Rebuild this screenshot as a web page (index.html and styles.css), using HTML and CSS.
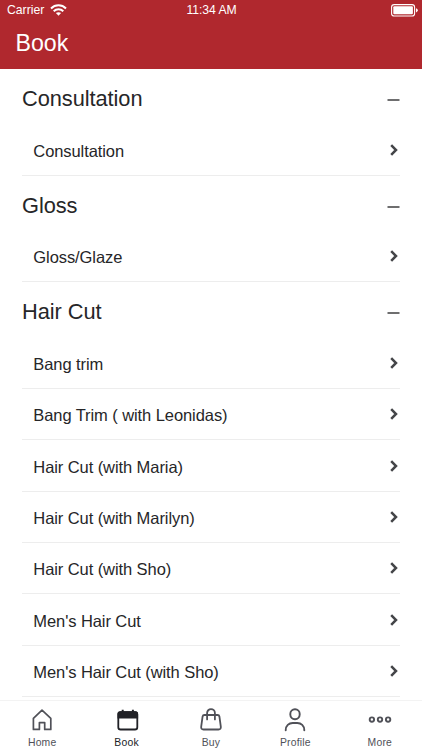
FILE: index.html
```html
<!DOCTYPE html>
<html lang="en">
<head>
<meta charset="utf-8">
<title>Book</title>
<link rel="stylesheet" href="styles.css">
</head>
<body>
<svg class="defs" width="0" height="0">
  <symbol id="chevron" viewBox="0 0 8 12"><path d="M1.2 1.2 6 6 1.2 10.8" fill="none" stroke="#444548" stroke-width="2.5"/></symbol>
  <symbol id="minus" viewBox="0 0 13 4"><path d="M.5 2h12" fill="none" stroke="#303032" stroke-width="1.4"/></symbol>
</svg>
<div class="app">
  <header class="header">
    <div class="status">
      <div class="carrier"><span>Carrier</span>
        <svg width="17" height="12" viewBox="0 0 17 12" fill="none" stroke="#fff" stroke-width="2"><path d="M1 4.5C5.2.3 11.8.3 16 4.5M3.7 7.2C6.4 4.6 10.6 4.6 13.3 7.2"/><path d="M5.9 9.1C7.4 7.8 9.6 7.8 11.1 9.1L8.5 11.8Z" fill="#fff" stroke="none"/></svg>
      </div>
      <span class="time">11:34 AM</span>
      <svg class="battery" width="27" height="13" viewBox="0 0 27 13"><rect x=".6" y=".6" width="23" height="11.4" rx="2.6" fill="none" stroke="#fff" stroke-width="1.1"/><rect x="2.3" y="2.3" width="19.6" height="8" rx="1" fill="#fff"/><path d="M25 4.2q1.8.6 1.8 2.1T25 8.4z" fill="#fff"/></svg>
    </div>
    <h1>Book</h1>
  </header>
  <main class="services">
    <section>
      <h2>Consultation<svg class="minus"><use href="#minus"/></svg></h2>
      <div class="item">Consultation<svg class="chevron"><use href="#chevron"/></svg></div>
    </section>
    <section>
      <h2>Gloss<svg class="minus"><use href="#minus"/></svg></h2>
      <div class="item">Gloss/Glaze<svg class="chevron"><use href="#chevron"/></svg></div>
    </section>
    <section>
      <h2>Hair Cut<svg class="minus"><use href="#minus"/></svg></h2>
      <div class="item">Bang trim<svg class="chevron"><use href="#chevron"/></svg></div>
      <div class="item">Bang Trim ( with Leonidas)<svg class="chevron"><use href="#chevron"/></svg></div>
      <div class="item">Hair Cut (with Maria)<svg class="chevron"><use href="#chevron"/></svg></div>
      <div class="item">Hair Cut (with Marilyn)<svg class="chevron"><use href="#chevron"/></svg></div>
      <div class="item">Hair Cut (with Sho)<svg class="chevron"><use href="#chevron"/></svg></div>
      <div class="item">Men's Hair Cut<svg class="chevron"><use href="#chevron"/></svg></div>
      <div class="item">Men's Hair Cut (with Sho)<svg class="chevron"><use href="#chevron"/></svg></div>
    </section>
  </main>
  <nav class="tabs">
    <a class="tab"><svg width="26" height="26" viewBox="0 0 26 26" fill="none" stroke="#505158" stroke-width="1.7" stroke-linejoin="round"><path d="M4.4 22.4V11.4L13 3.2l8.8 8.2v11h-6.1v-6.8h-5.3v6.8Z"/></svg><span>Home</span></a>
    <a class="tab active"><svg width="26" height="26" viewBox="0 0 26 26"><g transform="translate(.3 .3)"><rect x="4" y="4.8" width="19" height="17.4" rx="2.3" fill="none" stroke="#202126" stroke-width="1.8"/><path d="M3.2 11.2V6.8q0-2.8 2.8-2.8h15q2.8 0 2.8 2.8v4.4ZM7.4 2.5h2v2h-2zM17.6 2.5h2v2h-2z" fill="#202126"/></g></svg><span>Book</span></a>
    <a class="tab"><svg width="26" height="26" viewBox="0 0 26 26" fill="none" stroke="#505158" stroke-width="1.8" stroke-linecap="round"><path d="M6.4 8h13.2q1.5 0 1.8 1.5l1.4 10.2q.4 2.8-2.3 2.8H5.5q-2.7 0-2.3-2.8L4.6 9.5q.3-1.5 1.8-1.5Z"/><path d="M9.1 12.4V6a3.9 3.9 0 0 1 7.8 0v6.4"/></svg><span>Buy</span></a>
    <a class="tab"><svg width="26" height="26" viewBox="0 0 26 26" fill="none" stroke="#505158" stroke-width="1.9" stroke-linecap="round"><rect x="8.3" y="2.3" width="9.4" height="9.9" rx="4.6"/><path d="M3.7 23.2c0-4.5 3.2-7.2 7-7.2h4.6c3.8 0 7 2.7 7 7.2"/></svg><span>Profile</span></a>
    <a class="tab"><svg width="26" height="26" viewBox="0 0 26 26" fill="none" stroke="#505158" stroke-width="1.9"><circle cx="4.9" cy="12.6" r="2.2"/><circle cx="13" cy="12.6" r="2.2"/><circle cx="21.1" cy="12.6" r="2.2"/></svg><span>More</span></a>
  </nav>
</div>
</body>
</html>
```
FILE: styles.css
```css
* { box-sizing: border-box; }
body { margin: 0; background: #fff; color: #262628; font-family: "Liberation Sans", Arial, sans-serif; }
.defs { display: block; }
.app { width: 422px; height: 750px; display: flex; flex-direction: column; overflow: hidden; }
.header { flex: none; height: 69px; background: #b0282e; color: #fff; }
.status { height: 20px; padding: 0 4px 0 7px; display: grid; grid-template-columns: 1fr auto 1fr; align-items: center; font-size: 12.2px; line-height: 20px; }
.carrier { display: flex; align-items: center; gap: 6px; letter-spacing: 0; }
.time { font-size: 12.2px; letter-spacing: -.05px; transform: translateX(-1px); }
.battery { justify-self: end; }
h1 { margin: 0; padding-left: 15.5px; font-size: 23.2px; line-height: 46px; font-weight: 400; }
.services { flex: 1; min-height: 0; overflow: hidden; padding: 0 22px; }
h2 { margin: 0; height: 55.4px; padding-top: 4.5px; display: flex; align-items: center; justify-content: space-between; font-size: 21.8px; letter-spacing: -.06px; font-weight: 400; }
.minus { width: 13px; height: 4px; margin-top: 2px; }
.item { height: 51.3px; padding: 3.5px 2px 0 11.3px; display: flex; align-items: center; justify-content: space-between; border-bottom: 1px solid #ededed; font-size: 16.5px; letter-spacing: -.08px; white-space: nowrap; }
.chevron { width: 8px; height: 12px; margin-bottom: 3px; }
.tabs { flex: none; height: 50px; padding-top: 6px; display: grid; grid-template-columns: repeat(5, 1fr); background: #fff; border-top: 1px solid #f3f3f3; }
.tab { display: flex; flex-direction: column; align-items: center; font-size: 10.4px; line-height: 12px; letter-spacing: .2px; color: #505158; }
.tab svg { display: block; margin-bottom: -1px; }
.tab span { margin-top: 5px; }
.active { color: #202126; }
```
